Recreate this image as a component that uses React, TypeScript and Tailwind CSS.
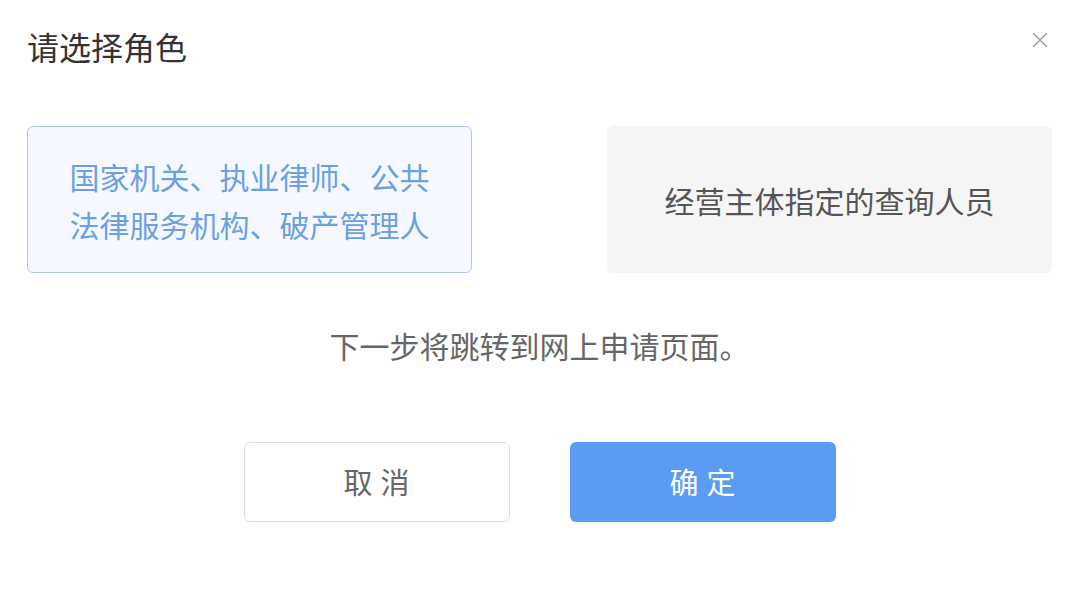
import React from 'react';

const font = { fontFamily: '"Noto Sans CJK SC", "Noto Sans", sans-serif' };

function CloseIcon() {
  return (
    <svg width="16" height="16" viewBox="0 0 16 16" fill="none" stroke="#9a9a9a" strokeWidth="1.4" strokeLinecap="round">
      <path d="M1.5 1.5 L14.5 14.5 M14.5 1.5 L1.5 14.5" />
    </svg>
  );
}

export default function App() {
  return (
    <div className="w-full h-[592px] bg-white pl-[27px] pr-[28px] pt-[28px] font-['Noto_Sans_CJK_SC',sans-serif]" style={font}>
      <div className="flex items-start justify-between">
        <h1 className="text-[32px] leading-[36px] text-[#333333] font-normal">请选择角色</h1>
        <button className="mt-[4px] mr-[4px]">
          <CloseIcon />
        </button>
      </div>

      <div className="mt-[62px] flex gap-[135px]">
        <div className="w-[445px] h-[147px] rounded-[6px] border border-[#a9c9f0] bg-[#f5f9ff] flex items-center justify-center">
          <p className="text-[30px] leading-[48px] text-[#6d9fe3] text-center">
            国家机关、执业律师、公共
            <br />
            法律服务机构、破产管理人
          </p>
        </div>
        <div className="w-[445px] h-[147px] rounded-[6px] bg-[#f5f5f5] flex items-center justify-center">
          <p className="text-[30px] leading-[48px] text-[#555555]">经营主体指定的查询人员</p>
        </div>
      </div>

      <p className="mt-[57px] text-center text-[30px] leading-[30px] text-[#666666]">下一步将跳转到网上申请页面。</p>

      <div className="mt-[82px] flex justify-center gap-[60px]">
        <button className="w-[266px] h-[80px] rounded-[6px] border border-[#dedede] bg-white pl-[8px] text-[29px] tracking-[8px] text-[#666666]">
          取消
        </button>
        <button className="w-[266px] h-[80px] rounded-[6px] bg-[#5a9bf4] pl-[8px] text-[29px] tracking-[8px] text-white">
          确定
        </button>
      </div>
    </div>
  );
}
